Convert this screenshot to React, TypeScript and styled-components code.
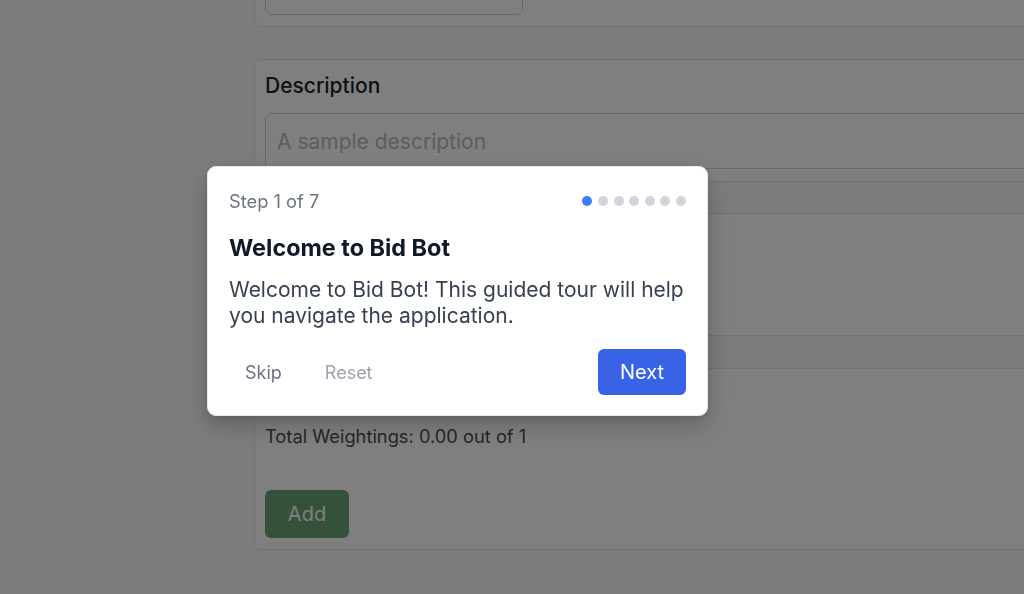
import React from "react";
import styled, { createGlobalStyle } from "styled-components";

const Global = createGlobalStyle`
  html, body { margin: 0; padding: 0; }
  body {
    background: #f6f8f6;
    font-family: Inter, "Noto Sans", "Liberation Sans", sans-serif;
    overflow: hidden;
    width: 1024px;
    height: 594px;
  }
  * { box-sizing: border-box; }
`;

const Page = styled.main`
  display: flex;
  flex-direction: column;
  gap: 32px;
  width: 860px;
  margin-left: 254px;
  margin-top: -54px;
`;

const Card = styled.section`
  background: #ffffff;
  border: 1px solid #e4e5e7;
  border-radius: 8px;
  padding: 12px 10px 11px;
  display: flex;
  flex-direction: column;
`;

const Label = styled.label`
  font-size: 21px;
  line-height: 28px;
  font-weight: 500;
  color: #1c1e22;
  margin-bottom: 13px;
`;

const TextInput = styled.input<{ $width?: number }>`
  width: ${(p) => (p.$width ? `${p.$width}px` : "100%")};
  height: 56px;
  border: 1px solid #d0d2d6;
  border-radius: 6px;
  padding: 0 11px;
  font-family: inherit;
  font-size: 21px;
  color: #222;
  background: #fff;
  outline: none;
  &::placeholder { color: #b8babd; }
`;

const Table = styled.div`
  margin-top: 12px;
  display: flex;
  flex-direction: column;
  margin-left: -10px;
  margin-right: -10px;
`;

const GrayRow = styled.div<{ $h: number }>`
  height: ${(p) => p.$h}px;
  background: #f6f8f6;
  border-top: 1px solid #dfe1e3;
  border-bottom: 1px solid #dfe1e3;
`;

const BodyArea = styled.div`
  height: 121px;
  background: #fff;
`;

const Total = styled.p`
  margin: 54px 0 0;
  font-size: 18.3px;
  line-height: 26px;
  color: #4a4d52;
`;

const AddButton = styled.button`
  margin-top: 41px;
  align-self: flex-start;
  height: 48px;
  width: 84px;
  padding: 0;
  border: none;
  border-radius: 6px;
  background: #68a373;
  color: #fff;
  font-family: inherit;
  font-size: 20px;
`;

const Overlay = styled.div`
  position: fixed;
  inset: 0;
  background: rgba(0, 0, 0, 0.5);
`;

const Modal = styled.div`
  position: fixed;
  left: 207px;
  top: 166px;
  width: 501px;
  background: #fff;
  border: 1px solid #e5e7eb;
  border-radius: 9px;
  padding: 20px 21px;
  box-shadow: 0 10px 25px rgba(0, 0, 0, 0.2), 0 4px 8px rgba(0, 0, 0, 0.08);
  display: flex;
  flex-direction: column;
`;

const Header = styled.div`
  display: flex;
  align-items: center;
  justify-content: space-between;
  height: 28px;
`;

const StepText = styled.span`
  font-size: 18.3px;
  color: #6b7280;
`;

const Dots = styled.div`
  display: flex;
  gap: 5.6px;
`;

const Dot = styled.span<{ $active?: boolean }>`
  width: 10px;
  height: 10px;
  border-radius: 50%;
  background: ${(p) => (p.$active ? "#3b7ff3" : "#d1d5db")};
`;

const Title = styled.h2`
  margin: 18px 0 0;
  font-size: 23.4px;
  line-height: 30px;
  font-weight: 700;
  color: #111827;
`;

const Body = styled.p`
  margin: 14px 0 0;
  font-size: 21px;
  line-height: 26px;
  color: #374151;
`;

const Footer = styled.div`
  margin-top: 20px;
  display: flex;
  align-items: center;
`;

const GhostButton = styled.button<{ $muted?: boolean }>`
  border: none;
  background: transparent;
  padding: 10px 16px;
  font-family: inherit;
  font-size: 18px;
  color: ${(p) => (p.$muted ? "#9ca3af" : "#6b7280")};
  & + & { margin-left: 11px; }
`;

const NextButton = styled.button`
  margin-left: auto;
  height: 46px;
  width: 88px;
  padding: 0;
  border: none;
  border-radius: 6px;
  background: #3863e6;
  color: #fff;
  font-family: inherit;
  font-size: 20px;
`;

export default function App() {
  return (
    <>
      <Global />
      <Page>
        <Card>
          <TextInput $width={258} readOnly aria-label="Title" />
        </Card>
        <Card>
          <Label>Description</Label>
          <TextInput placeholder="A sample description" readOnly />
          <Table>
            <GrayRow $h={33} />
            <BodyArea />
            <GrayRow $h={34} />
          </Table>
          <Total>Total Weightings: 0.00 out of 1</Total>
          <AddButton>Add</AddButton>
        </Card>
      </Page>
      <Overlay />
      <Modal role="dialog">
        <Header>
          <StepText>Step 1 of 7</StepText>
          <Dots>
            {Array.from({ length: 7 }).map((_, i) => (
              <Dot key={i} $active={i === 0} />
            ))}
          </Dots>
        </Header>
        <Title>Welcome to Bid Bot</Title>
        <Body>
          Welcome to Bid Bot! This guided tour will help you navigate the
          application.
        </Body>
        <Footer>
          <GhostButton>Skip</GhostButton>
          <GhostButton $muted>Reset</GhostButton>
          <NextButton>Next</NextButton>
        </Footer>
      </Modal>
    </>
  );
}
